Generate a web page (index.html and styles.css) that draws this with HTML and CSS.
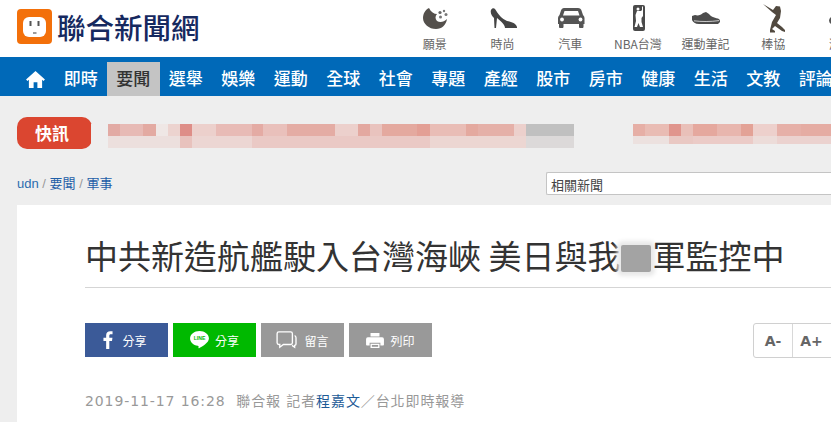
FILE: index.html
```html
<!DOCTYPE html>
<html lang="zh-Hant">
<head>
<meta charset="utf-8">
<title>聯合新聞網</title>
<link rel="stylesheet" href="styles.css">
</head>
<body>
<header class="top">
  <a class="brand">
    <svg class="plug" viewBox="0 0 35 35" width="35" height="35"><rect width="35" height="35" rx="4" fill="#f3700a"/><rect x="6" y="8" width="23" height="20" rx="6" fill="#fff"/><rect x="12.500" y="12" width="2" height="5" fill="#555"/><rect x="20.500" y="12" width="2" height="5" fill="#555"/><path d="M16 24h3.500" stroke="#666" stroke-width="1.300"/></svg>
    <span class="brand-name">聯合新聞網</span>
  </a>
  <nav class="channels">
    <a class="channel">
      <svg viewBox="0 0 30 30" width="30" height="30"><path d="M9 3C5 5 3 9 3 13c0 6 6 11 13 11 6 0 10-4 11-10-3 3-7 4-10 2-2-2-2-5 0-7-3 0-6-2-8-6z" fill="#54504c"/><circle cx="20" cy="7.500" r="1.600" fill="#666"/><circle cx="24" cy="6" r="1.200" fill="#777"/><circle cx="26" cy="9.500" r="1.500" fill="#777"/><circle cx="20.500" cy="12" r="1.500" fill="#777"/></svg>
      <span>願景</span>
    </a>
    <a class="channel">
      <svg viewBox="0 0 30 30" width="30" height="30"><path d="M3 5c1-2 3-2 4-1 3 5 7 10 12 12 4 1 9 2 10 6v1H17c0-3-4-7-8-10L8 23H6.500L6 13C4 11 2 8 3 5z" fill="#444"/></svg>
      <span>時尚</span>
    </a>
    <a class="channel">
      <svg viewBox="0 0 30 30" width="30" height="30"><path d="M9 3h14c2 0 3 1 3.500 2.500L28 10c1 1 1.500 2 1.500 3v6h-1v3c0 .5-.5 1-1 1H25c-.5 0-1-.5-1-1v-3H8.500v3c0 .5-.5 1-1 1H5c-.5 0-1-.5-1-1v-3H3v-6c0-1 .5-2 1.500-3L6 5.500C6.500 4 7.500 3 9 3zm.5 3L8 10.500h16.500L23 6z" fill="#555" fill-rule="evenodd"/><circle cx="7" cy="14.500" r="1.900" fill="#fff"/><circle cx="25.500" cy="14.500" r="1.900" fill="#fff"/></svg>
      <span>汽車</span>
    </a>
    <a class="channel">
      <svg class="tall" viewBox="0 0 30 30" width="30" height="30"><rect x="10" y="0" width="12" height="26" rx="2" fill="#4a4a4a"/><path d="M14 6h4l1-1V1.500h1V11l-1.500 2v4l1.500 5h-3l-1.500-4-1.500 4h-2.500l1.500-6-.5-6z" fill="#fff"/><circle cx="15" cy="4" r="1.500" fill="#fff"/></svg>
      <span>NBA台灣</span>
    </a>
    <a class="channel">
      <svg viewBox="0 0 30 30" width="30" height="30"><path d="M1 11l3-1c3 1 6 0 8-2l3-1 3 2c2 3 7 4 10 5 1 1 1 2 1 3l-2 2H8c-4 0-6-2-7-4z" fill="#4c4c4c"/><path d="M3 15.800c7 1 17 1 25-.2" fill="none" stroke="#fff" stroke-width=".7"/></svg>
      <span>運動筆記</span>
    </a>
    <a class="channel">
      <svg class="tall" viewBox="0 0 30 30" width="30" height="30"><path d="M5-1l10 6 3-4 4 .5 1 4.500-1 7-3 5 5 4 3 3v2l-3-1-7-5-3 3 3 2v1.500h-5V25l2-8 4-7-4-3z" fill="#51493f"/></svg>
      <span>棒協</span>
    </a>
    <a class="channel">
      <svg viewBox="0 0 30 30" width="30" height="30"><ellipse cx="15" cy="15.500" rx="12" ry="6.500" fill="#555"/></svg>
      <span>潮流</span>
    </a>
  </nav>
</header>

<nav class="mainnav">
  <a class="home"><svg viewBox="0 0 20 18" width="19" height="17"><path d="M10 0 0 9l1.500 1.500L3 9.200V18h5v-6h4v6h5V9.200l1.500 1.300L20 9z" fill="#fff"/></svg></a>
  <a class="tab">即時</a>
  <a class="tab active">要聞</a>
  <a class="tab">選舉</a>
  <a class="tab">娛樂</a>
  <a class="tab">運動</a>
  <a class="tab">全球</a>
  <a class="tab">社會</a>
  <a class="tab">專題</a>
  <a class="tab">產經</a>
  <a class="tab">股市</a>
  <a class="tab">房市</a>
  <a class="tab">健康</a>
  <a class="tab">生活</a>
  <a class="tab">文教</a>
  <a class="tab">評論</a>
</nav>

<section class="ticker">
  <span class="flash">快訊</span>
  <span class="mosaic mosaic-a"></span>
  <span class="mosaic mosaic-b"></span>
</section>

<section class="crumbs">
  <p class="path">udn <i>/</i> <a>要聞</a> <i>/</i> <a>軍事</a></p>
  <div class="related">相關新聞</div>
</section>

<main class="article">
  <h1 class="headline">中共新造航艦駛入台灣海峽 美日與我<span class="smudge"></span>軍監控中</h1>
  <div class="tools">
    <a class="share fb"><svg viewBox="0 0 12 20" width="11" height="18"><path d="M8 20v-9h3l.5-3.500H8V5.300C8 4.300 8.300 3.600 9.800 3.600h1.800V.400C11.200.300 10.200.200 9 .200 6.400.200 4.500 1.800 4.500 4.800v2.700h-3V11h3v9z" fill="#fff"/></svg><span>分享</span></a>
    <a class="share line"><svg viewBox="0 0 22 21" width="19" height="18"><path d="M11 0C5 0 0 3.800 0 8.700c0 4.300 3.800 7.900 9 8.600.4.100 .8.300 .9.600 .1.600-.1 1.500-.1 1.700 0 .3.100.7 .7.400 3-1.600 11.500-6.200 11.500-11.300C22 3.800 17 0 11 0z" fill="#fff"/><text x="11" y="11" class="line-mark" text-anchor="middle">LINE</text></svg><span>分享</span></a>
    <a class="share grey"><svg viewBox="0 0 24 20" width="22" height="18"><path d="M3 1h13a2 2 0 0 1 2 2v10a2 2 0 0 1-2 2H8l-4 3v-3H3a2 2 0 0 1-2-2V3a2 2 0 0 1 2-2z" fill="none" stroke="#fff" stroke-width="1.500"/><path d="M20.500 5c1 .5 1.500 1 1.500 2.500v7c0 1-.5 1.500-1.500 1.500v2l-3-2" fill="none" stroke="#fff" stroke-width="1.500"/></svg><span>留言</span></a>
    <a class="share grey"><svg viewBox="0 0 20 19" width="18" height="17"><path d="M5 1h10v4H5zM2 6h16a2 2 0 0 1 2 2v6a1 1 0 0 1-1 1h-3v-3H4v3H1a1 1 0 0 1-1-1V8a2 2 0 0 1 2-2zM5 13h10v5H5z" fill="#fff"/><rect x="6.500" y="14.500" width="7" height="2" fill="#999"/></svg><span>列印</span></a>
    <div class="sizer"><button class="size">A-</button><button class="size">A+</button></div>
  </div>
  <p class="meta">2019-11-17 16:28&nbsp;&nbsp;聯合報 記者<a>程嘉文</a>／台北即時報導</p>
</main>
</body>
</html>
```

FILE: styles.css
```css
* { box-sizing: border-box; }
html, body { margin: 0; padding: 0; height: 422px; overflow: hidden; }
body {
  width: 831px;
  background: #eeeeee;
  font-family: "Noto Sans CJK TC", "Liberation Sans", sans-serif;
}
a { color: inherit; text-decoration: none; }

.top {
  display: flex;
  height: 57px;
  background: #fff;
  padding-left: 17px;
  overflow: hidden;
}
.brand { display: flex; align-items: center; gap: 6px; width: 384px; height: 53px; flex: none; }
.plug { flex: none; }
.brand-name { color: #16295f; font-size: 28.500px; line-height: 36px; font-weight: 500; margin-left: -1px; }
.channels { display: flex; flex: none; padding-top: 5px; }
.channel {
  display: flex;
  flex-direction: column;
  align-items: center;
  width: 67.700px;
  color: #666;
  font-size: 12px;
  line-height: 16px;
  white-space: nowrap;
}
.channel svg { display: block; height: 30px; margin-bottom: 1px; overflow: visible; }

.mainnav {
  display: flex;
  align-items: flex-end;
  height: 39px;
  background: #0069b8;
  padding-left: 25px;
  overflow: hidden;
}
.home { width: 21px; height: 34px; margin-right: 8.500px; flex: none; display: flex; align-items: center; justify-content: center; }
.tab {
  flex: none;
  width: 52.500px;
  height: 34px;
  text-align: center;
  color: #fff;
  font-size: 17px;
  line-height: 32px;
  font-weight: 500;
}
.tab.active { background: #c4c4c4; color: #333; }

.ticker { display: flex; height: 76px; padding: 21px 0 0 17px; align-items: flex-start; }
.flash {
  flex: none;
  width: 75px;
  height: 32px;
  border-radius: 10px;
  background: #db4630;
  color: #fff;
  font-size: 17px;
  font-weight: 700;
  line-height: 32px;
  text-align: center;
  padding-right: 5px;
}
.mosaic { flex: none; display: block; height: 24px; margin-top: 7px; }
.mosaic-a {
  width: 483px;
  margin-left: -1px;
  background:
    linear-gradient(90deg, #eee 0 17px, #e2aaa4 17px 29px, #e7bab5 29px 52px, #e3aaa2 52px 65px, #efe7e5 65px 77px, #ecd3cf 77px 89px, #de8e88 89px 101px, #ecd0cc 101px 125px, #e8bbb6 125px 161px, #e4aba4 161px 172px, #e9c0bb 172px 196px, #e4aca4 196px 244px, #ecd0cc 244px 267px, #e3a8a0 267px 279px, #e9c3be 279px 291px, #e4a99f 291px 326px, #e39f95 326px 339px, #e9bdb6 339px 375px, #e4a99f 375px 387px, #e5b0a8 387px 423px, #ecd0cc 423px 435px, #c0c0c0 435px 483px) top / 100% 12px no-repeat,
    linear-gradient(90deg, #eee 0 17px, #ecdfdd 17px 89px, #e8c2bd 89px 101px, #ecd6d3 101px 161px, #eac9c5 161px 339px, #ecd6d2 339px 435px, #dcd9d9 435px 483px) bottom / 100% 12px no-repeat;
}
.mosaic-b {
  width: 198px;
  margin-left: 59px;
  background:
    linear-gradient(90deg, #e6afa6 0 12px, #e9bcb4 12px 36px, #e0958d 36px 48px, #e9c0b9 48px 60px, #e5a89e 60px 84px, #e8b6ae 84px 108px, #e3a296 108px 120px, #edd0cc 120px 144px, #e6b0a8 144px 168px, #e5aca3 168px 198px) top / 100% 12px no-repeat,
    linear-gradient(90deg, #ece1df 0 36px, #e9c8c3 36px 60px, #ebcbc7 60px 120px, #ecdcd9 120px 144px, #ebd2cf 144px 198px) bottom / 100% 8px no-repeat,
    linear-gradient(#eee, #eee);
  background-position: top, 0 12px, 0 0;
}

.crumbs { display: flex; height: 33px; padding-left: 17px; justify-content: space-between; }
.path { margin: 0; padding-top: 2px; font-size: 13px; line-height: 20px; color: #2b6cae; font-family: "Liberation Sans", "Noto Sans CJK TC", sans-serif; }
.path i { font-style: normal; color: #999; }
.path a { color: #1f5fa8; }
.related {
  flex: none;
  width: 285px;
  height: 23px;
  background: #fff;
  border: 1px solid #c4c4c4;
  border-right: 0;
  border-radius: 2px 0 0 2px;
  padding-left: 4px;
  color: #444;
  font-size: 13px;
  line-height: 23px;
}
.article {
  height: 217px;
  margin-left: 17px;
  background: #fff;
  padding: 28px 0 0 68px;
}
.headline {
  margin: 0;
  height: 55px;
  border-bottom: 1px solid #d5d5d5;
  color: #333;
  font-size: 33px;
  font-weight: 400;
  line-height: 44px;
  white-space: nowrap;
}
.smudge {
  display: inline-block;
  width: 30px;
  height: 27px;
  margin: 0 1px;
  vertical-align: -3px;
  background: #a3a3a3;
  box-shadow: 0 0 4px 4px #e8e8e8;
  border-radius: 2px;
}
.tools { display: flex; gap: 5px; margin-top: 35px; height: 35px; }
.share {
  display: flex;
  align-items: center;
  justify-content: center;
  gap: 6px;
  width: 83px;
  height: 34px;
  color: #fff;
  font-size: 12px;
  flex: none;
}
.fb { background: #3b5a98; gap: 9px; padding-right: 4px; }
.line { background: #00b900; }
.grey { background: #999; }
.line-mark { font: 700 6px "Liberation Sans", sans-serif; fill: #00b900; }
.sizer {
  display: flex;
  flex: none;
  margin-left: 316px;
  width: 90px;
  height: 35px;
  background: #fff;
  border: 1px solid #d0d0d0;
  border-radius: 3px;
}
.size {
  width: 38px;
  padding: 0;
  border: 0;
  background: none;
  color: #666;
  font: 700 14px "DejaVu Sans", sans-serif;
}
.size + .size { border-left: 1px solid #d8d8d8; }
.meta {
  margin: 33px 0 0;
  color: #999;
  font-family: "DejaVu Sans", "Noto Sans CJK TC", sans-serif;
  font-size: 14px;
  line-height: 20px;
  letter-spacing: .9px;
  white-space: nowrap;
}
.meta a { color: #1c5a96; }
```
